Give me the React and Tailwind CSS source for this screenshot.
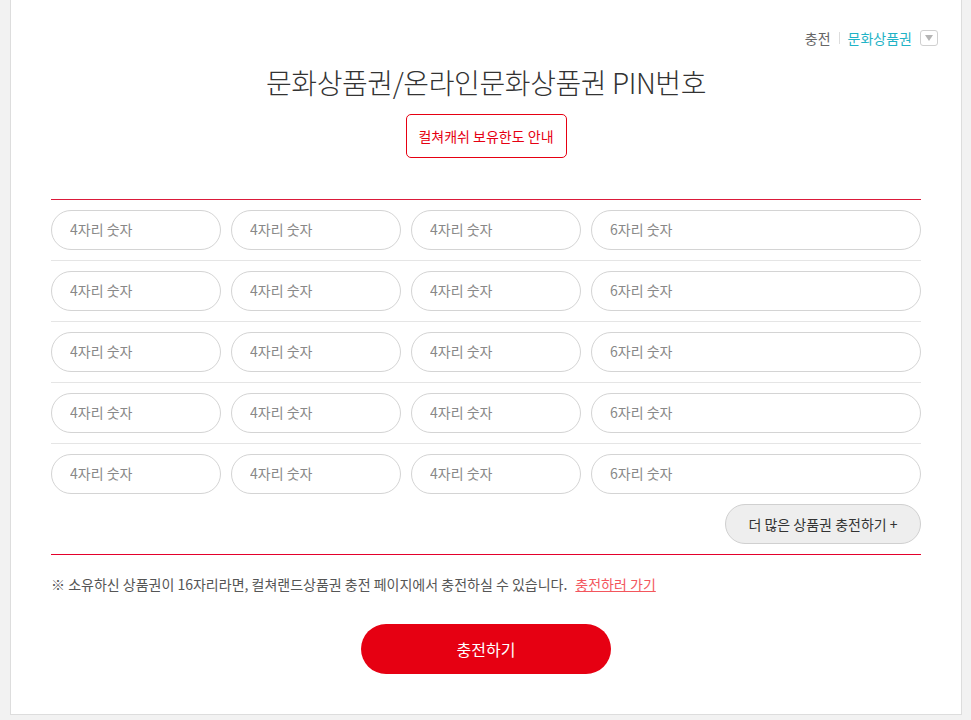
import React from "react";

const font = { fontFamily: '"Noto Sans CJK KR", "Noto Sans", sans-serif' };

function PinInput({ wide, ph }) {
  return (
    <input
      type="text"
      placeholder={ph}
      className={`${wide ? "w-[330px]" : "w-[170px]"} h-[40px] rounded-full border border-[#d4d4d4] bg-white pl-[18px] pb-[2px] text-[14px] font-normal text-[#333] outline-none placeholder:text-[#888]`}
    />
  );
}

function Row({ last }) {
  return (
    <div className={`flex gap-[10px] py-[10px] ${last ? "" : "border-b border-[#e5e5e5]"}`}>
      <PinInput ph="4자리 숫자" />
      <PinInput ph="4자리 숫자" />
      <PinInput ph="4자리 숫자" />
      <PinInput wide ph="6자리 숫자" />
    </div>
  );
}

export default function App() {
  return (
    <div className="min-h-[720px] bg-[#f2f2f2] pl-[10px]" style={font}>
      <div className="w-[952px] border-x border-b border-[#dddddd] bg-white px-[40px] pt-[30px] pb-[40px]">
        <div className="-mr-[17px] flex h-[16px] items-center justify-end text-[14px] font-normal">
          <span className="text-[#666]">충전</span>
          <span className="mx-[8px] h-[12px] w-px bg-[#ddd]" />
          <span className="text-[#1fb3c6]">문화상품권</span>
          <span className="ml-[8px] flex h-[16px] w-[18px] items-center justify-center rounded-[3px] border border-[#d0d0d0] bg-white">
            <svg width="8" height="6" viewBox="0 0 8 6">
              <path d="M0 0 L8 0 L4 6 Z" fill="#b5b5b5" />
            </svg>
          </span>
        </div>
        <h1 className="mt-[18px] text-center text-[28px] font-light leading-[36px] tracking-[-0.4px] text-[#333]">
          문화상품권/온라인문화상품권 PIN번호
        </h1>
        <div className="mt-[14px] flex justify-center">
          <button className="h-[44px] w-[161px] rounded-[5px] border border-[#e60012] text-[14px] font-normal text-[#e60012]">
            컬쳐캐쉬 보유한도 안내
          </button>
        </div>
        <div className="mt-[41px] border-t border-[#db1a3a]">
          <Row />
          <Row />
          <Row />
          <Row />
          <Row last />
          <div className="flex justify-end">
            <button className="h-[40px] w-[196px] rounded-full border border-[#d0d0d0] bg-[#eeeeee] text-[14px] font-normal text-[#333]">
              더 많은 상품권 충전하기 +
            </button>
          </div>
          <div className="mt-[10px] border-t border-[#e4002b]" />
        </div>
        <p className="mt-[19px] text-[14px] leading-[20px] text-[#555]">
          ※ 소유하신 상품권이 16자리라면, 컬쳐랜드상품권 충전 페이지에서 충전하실 수 있습니다.
          <a href="#" className="ml-[8px] text-[#f3565d] underline">충전하러 가기</a>
        </p>
        <div className="mt-[30px] flex justify-center">
          <button className="h-[50px] w-[250px] rounded-full bg-[#e60012] text-[16px] font-normal text-white">
            충전하기
          </button>
        </div>
      </div>
    </div>
  );
}
